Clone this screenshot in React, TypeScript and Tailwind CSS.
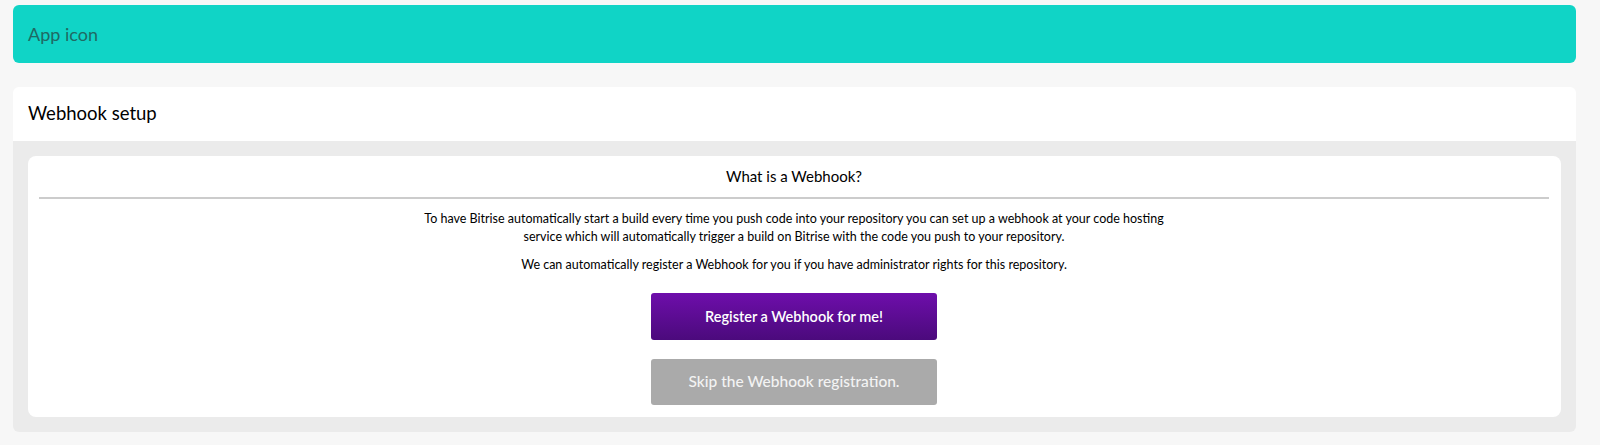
import React from 'react';

const font = { fontFamily: 'Lato, "Open Sans", sans-serif' };

export default function App() {
    return (
        <div className="min-h-[445px] bg-[#f7f7f7] pl-[13px] pr-[24px] pt-[5px]" style={font}>
            {/* App icon bar */}
            <div className="flex h-[58px] items-center rounded-md bg-[#10d4c6] px-[15px] text-[18px] text-[#1f6a63]">
                App icon
            </div>

            {/* Webhook card */}
            <div className="mt-[24px] overflow-hidden rounded-md">
                <div className="flex h-[54px] items-center bg-white px-[15px] text-[18.5px] text-black">
                    Webhook setup
                </div>
                <div className="bg-[#ebebeb] p-[15px]">
                    <div className="rounded-lg bg-white pl-[11px] pr-[12px] pb-[12px]">
                        <div className="flex h-[41px] items-center justify-center text-[15px] text-black">
                            What is a Webhook?
                        </div>
                        <div className="h-[2px] bg-[#cccccc]" />
                        <div className="mx-auto mt-[11px] max-w-[760px] text-center text-[12.5px] leading-[18px] text-black">
                            <p>
                                To have Bitrise automatically start a build every time you push code into your repository you can set up a webhook at your code hosting service which will automatically trigger a build on Bitrise with the code you push to your repository.
                            </p>
                            <p className="mt-[10px]">
                                We can automatically register a Webhook for you if you have administrator rights for this repository.
                            </p>
                        </div>
                        <div className="mt-[19px] flex flex-col items-center gap-[19px]">
                            <button className="h-[47px] w-[286px] rounded-[3px] bg-gradient-to-b from-[#6e0eab] to-[#4b0a7c] text-[14.5px] font-semibold text-white">
                                Register a Webhook for me!
                            </button>
                            <button className="h-[46px] w-[286px] rounded-[3px] bg-[#aaaaaa] text-[15.5px] font-medium text-[#f3f3f3]">
                                Skip the Webhook registration.
                            </button>
                        </div>
                    </div>
                </div>
            </div>
        </div>
    );
}
